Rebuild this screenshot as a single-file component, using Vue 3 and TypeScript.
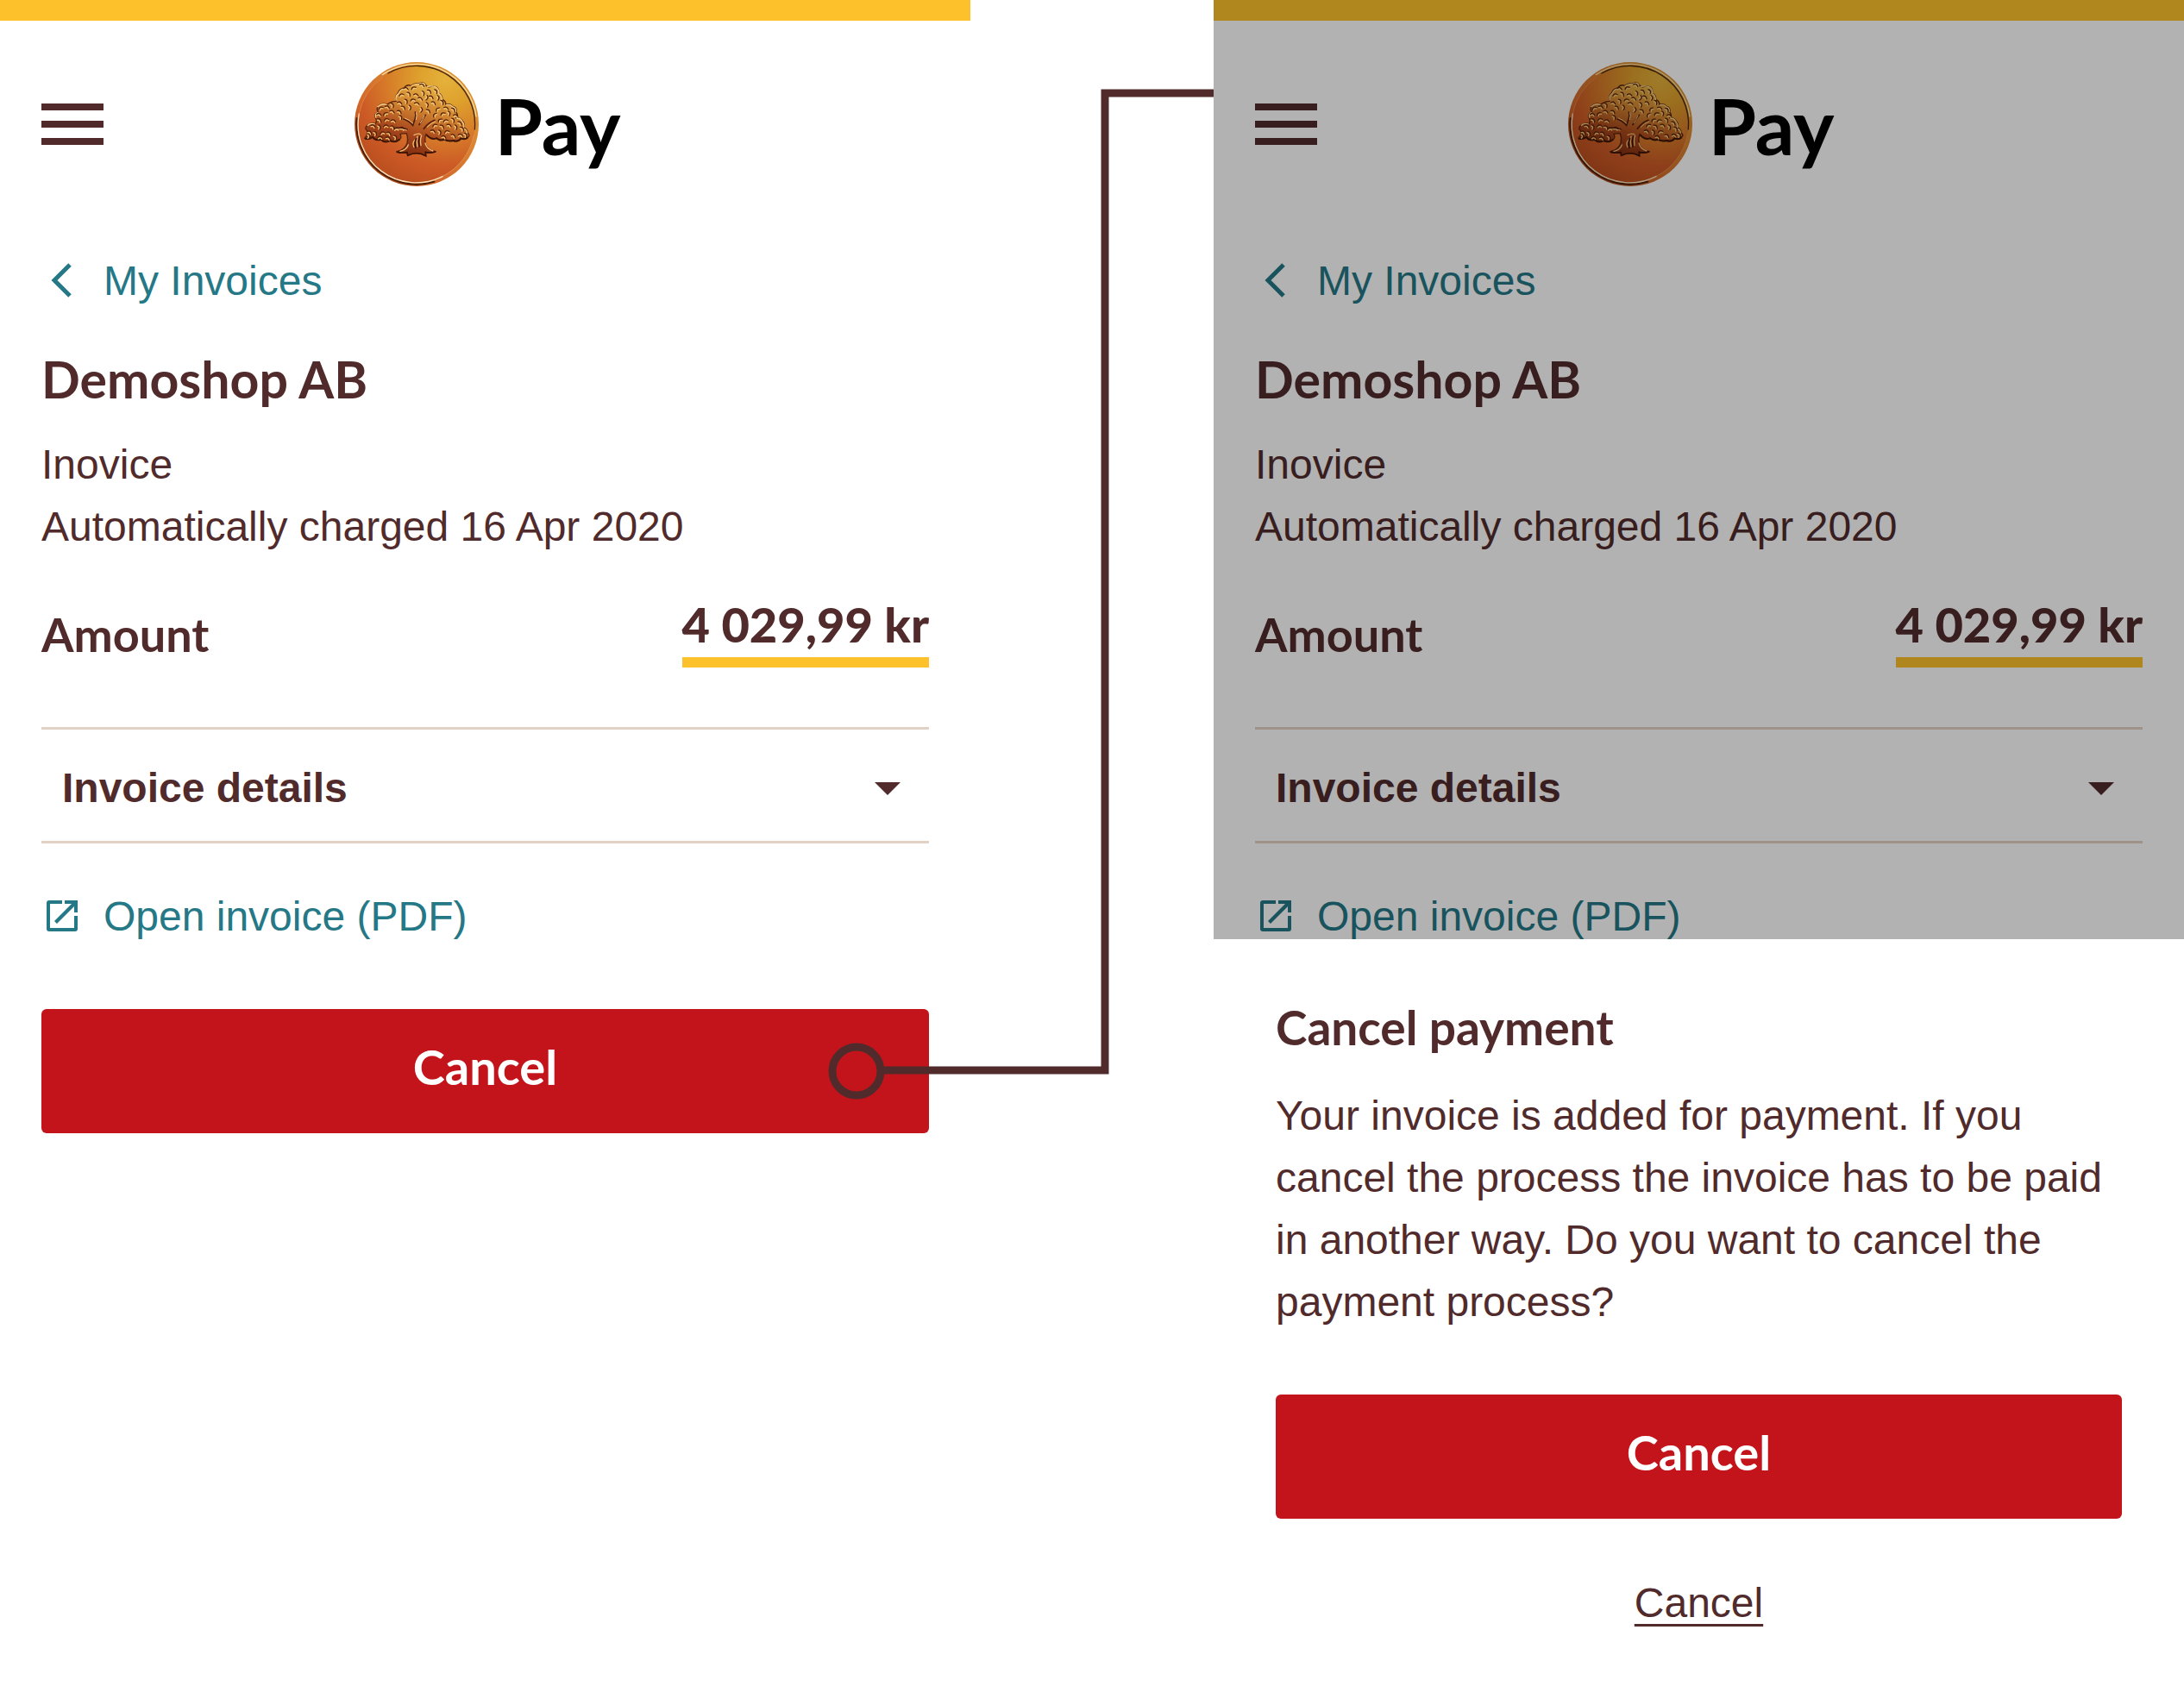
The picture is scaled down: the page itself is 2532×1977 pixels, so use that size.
<script setup lang="ts">
interface Screen {
  id: string
  dialog: boolean
}

const screens: Screen[] = [
  { id: 'invoice', dialog: false },
  { id: 'confirm', dialog: true },
]

// Leaf marks on the coin's oak: x, y and rotation in degrees
const leaves: [number, number, number][] = [
  [212, 128, 10], [238, 126, -30], [268, 116, 20], [293, 138, 40], [316, 138, 60],
  [196, 150, -20], [222, 147, 50], [247, 150, 10], [272, 144, 70], [300, 158, 30],
  [324, 160, 80], [190, 178, 15], [213, 172, 60], [236, 168, -15], [262, 163, 25],
  [285, 160, 100], [308, 178, 30], [338, 176, 60], [124, 196, -30], [147, 192, 20],
  [165, 186, 60], [203, 194, 40], [226, 194, 80], [250, 180, 10], [286, 184, 70],
  [322, 200, -50], [352, 196, 20], [377, 202, 50], [118, 218, 10], [140, 216, -40],
  [164, 208, 20], [189, 209, 30], [266, 202, 90], [290, 206, 40], [312, 220, -60],
  [340, 216, -30], [362, 214, 70], [385, 222, 10], [120, 238, 40], [144, 236, -20],
  [168, 240, 10], [194, 228, 60], [330, 238, -40], [350, 240, -20], [376, 238, 60],
  [400, 248, 40], [98, 258, 20], [120, 262, 70], [142, 258, -10], [165, 262, 30],
  [312, 256, -30], [338, 260, 40], [362, 256, 20], [386, 262, 70], [408, 268, 50],
  [86, 280, 30], [106, 284, 60], [130, 282, -20], [153, 284, 30], [178, 268, -10],
  [200, 266, 20], [306, 276, 20], [330, 280, 70], [354, 278, -20], [377, 292, 30],
  [402, 290, 10], [122, 298, 0], [150, 300, 20], [176, 298, 60], [344, 296, 20],
  [420, 290, 60], [84, 294, 80],
]
</script>

<template>
  <main class="board">
    <section v-for="screen in screens" :key="screen.id" class="screen">
      <header class="top">
        <button class="menu" type="button" aria-label="Menu">
          <span></span><span></span><span></span>
        </button>
        <div class="brand">
          <svg class="coin" viewBox="33 36 432 432" aria-hidden="true">
            <defs>
              <radialGradient :id="screen.id + '-face'" gradientUnits="userSpaceOnUse" cx="350" cy="95" r="380">
                <stop offset="0" stop-color="#e4b23c" />
                <stop offset=".25" stop-color="#dea02c" />
                <stop offset=".55" stop-color="#d67a29" />
                <stop offset=".8" stop-color="#cc5a26" />
                <stop offset="1" stop-color="#bd5020" />
              </radialGradient>
              <linearGradient :id="screen.id + '-rim'" x1="0" y1="1" x2="1" y2="0">
                <stop offset="0" stop-color="#8c3c12" />
                <stop offset=".35" stop-color="#d2672b" />
                <stop offset=".7" stop-color="#dc8a32" />
                <stop offset="1" stop-color="#d9992f" />
              </linearGradient>
              <linearGradient :id="screen.id + '-tree'" gradientUnits="userSpaceOnUse" x1="300" y1="105" x2="225" y2="355">
                <stop offset="0" stop-color="#e5b544" />
                <stop offset=".4" stop-color="#cf8230" />
                <stop offset=".72" stop-color="#a9481d" />
                <stop offset="1" stop-color="#853012" />
              </linearGradient>
            </defs>
            <circle cx="249" cy="252" r="216" :fill="`url(#${screen.id}-rim)`" />
            <circle cx="249" cy="252" r="202" :fill="`url(#${screen.id}-face)`" />
            <g fill="none" stroke-linecap="round">
              <path d="M130 80A209 209 0 0 1 456 225" stroke="#f7dfa0" stroke-width="4" />
              <path d="M150 75A203 203 0 0 1 451 270" stroke="#4a2708" stroke-width="4" />
              <path d="M41 232A209 209 0 0 0 310 452" stroke="#4e1d06" stroke-width="6" />
              <path d="M49 215A202 202 0 0 0 340 433" stroke="#fbe3bd" stroke-width="4" />
              <path d="M340 433A202 202 0 0 0 448 290" stroke="#e59a5c" stroke-width="2" />
              <path d="M49 215A202 202 0 0 1 130 90" stroke="#e88b4c" stroke-width="2" />
            </g>
            <g stroke-linejoin="round">
              <path
                :fill="`url(#${screen.id}-tree)`"
                stroke="#5a240d"
                stroke-width="4"
                d="M68 301Q82 286 76 274Q66 266 78 256Q88 246 106 250Q112 240 106 230Q100 216 114 210Q108 192 118 186Q132 176 146 184Q160 172 178 172Q172 154 184 144Q190 128 206 126Q214 112 230 118Q242 108 254 112Q270 102 280 114Q284 124 296 122Q310 116 320 124Q328 132 326 144Q340 152 338 166Q352 172 350 184Q366 178 376 190Q390 194 386 210Q396 220 386 230Q402 228 408 240Q420 252 412 264Q426 268 426 282Q438 292 426 298Q416 308 404 300Q392 316 376 308Q358 314 346 304Q332 312 318 300Q300 308 282 286Q276 302 280 320Q286 340 315 347Q296 354 280 348L281 362Q250 344 218 361L215 349Q196 355 180 347Q208 342 216 318Q220 300 214 284Q202 284 192 286Q198 302 190 304Q174 318 156 308Q140 320 124 304Q104 310 96 296Q84 306 68 301Z"
              />
              <path
                fill="none"
                stroke="#f5cf86"
                stroke-width="4"
                d="M78 257Q88 247 104 252M108 230Q102 217 115 211M112 192Q132 176 146 186M178 170Q174 154 186 146Q192 130 208 128M230 120Q242 110 254 114Q270 104 280 116M284 122Q310 116 320 126Q328 134 326 146Q338 154 337 168M350 186Q366 180 375 192Q388 196 384 210M388 232Q402 230 407 242Q418 254 411 266M414 268Q424 270 424 284"
              />
              <path
                fill="none"
                stroke="#3f1707"
                stroke-width="6"
                d="M70 302Q84 306 96 297Q104 310 124 305Q140 320 156 309Q174 318 190 305M284 290Q300 308 318 301Q332 312 346 305Q358 314 376 309Q392 316 404 301Q416 308 428 298"
              />
            </g>
            <g fill="none" stroke-linecap="round" stroke-width="4">
              <g v-for="(leaf, i) in leaves" :key="i" :transform="`translate(${leaf[0]} ${leaf[1]}) rotate(${leaf[2]})`">
                <path d="M-8 1Q-1-8 8 2" stroke="#54220b" />
                <path d="M-6 5Q0-2 6 6" stroke="#f3c673" />
              </g>
            </g>
            <g fill="none" stroke-linecap="round">
              <path d="M204 234Q222 240 236 256L242 238Q248 222 244 210M258 254Q266 240 280 220M274 268Q290 246 312 238M172 266Q194 262 216 270" stroke="#4f1d0a" stroke-width="5" />
              <path d="M208 231Q224 236 236 249M247 236Q252 222 248 212M262 248Q270 236 276 222M286 262Q298 248 314 243M176 270Q194 267 214 273" stroke="#f4c67e" stroke-width="3" />
              <path d="M240 290Q254 282 264 288M240 332Q232 318 244 306M252 330Q248 310 252 294M264 326Q260 306 266 292M279 318Q284 338 306 345M192 346Q214 342 220 324" stroke="#f3bd72" stroke-width="4" />
              <path d="M246 334Q240 318 248 302M258 330Q254 312 259 296M181 349Q200 354 216 350L218 361Q250 345 281 362L280 350Q298 354 314 348" stroke="#3d1506" stroke-width="5" />
            </g>
          </svg>
          <span class="wordmark">Pay</span>
        </div>
      </header>

      <div class="content">
        <a class="link" href="#invoices">
          <svg viewBox="0 0 48 48" aria-hidden="true">
            <path d="M33 5L15 23L33 41" fill="none" stroke="currentColor" stroke-width="5" />
          </svg>
          My Invoices
        </a>
        <h1>Demoshop AB</h1>
        <p class="summary">Inovice<br />Automatically charged 16 Apr 2020</p>
        <div class="amount">
          <span class="label">Amount</span>
          <strong class="value">4 029,99 kr</strong>
        </div>
        <button class="details" type="button" aria-expanded="false">
          Invoice details
          <svg viewBox="0 0 30 15" aria-hidden="true">
            <path d="M0 0H30L15 15Z" fill="currentColor" />
          </svg>
        </button>
        <a class="link pdf" href="#pdf">
          <svg viewBox="0 0 48 48" aria-hidden="true">
            <path
              fill="currentColor"
              d="M24 5V9H10V37H38V23H42V38Q42 41 39 41H9Q6 41 6 38V8Q6 5 9 5ZM27 5H42V19H38V12L18 32L15 29L35 9H27Z"
            />
          </svg>
          Open invoice (PDF)
        </a>
        <button v-if="!screen.dialog" class="primary" type="button">Cancel</button>
      </div>

      <template v-if="screen.dialog">
        <div class="scrim"></div>
        <div class="sheet" role="dialog" aria-labelledby="sheet-title">
          <h2 id="sheet-title">Cancel payment</h2>
          <p>
            Your invoice is added for payment. If you cancel the process the invoice has to be paid
            in another way. Do you want to cancel the payment process?
          </p>
          <button class="primary" type="button">Cancel</button>
          <button class="dismiss" type="button">Cancel</button>
        </div>
      </template>
    </section>

    <!-- Flow arrow from the cancel button to the confirmation screen -->
    <svg class="connector" viewBox="0 0 447 1176" aria-hidden="true">
      <g fill="none" stroke="#512b2b" stroke-width="9">
        <circle cx="33" cy="1139" r="28" />
        <path d="M62 1138H321V5H447" />
      </g>
    </svg>
  </main>
</template>

<style>
body {
  margin: 0;
  background: #fff;
}
</style>

<style scoped>
.board {
  position: relative;
  display: grid;
  grid-template-columns: 1fr 1fr;
  column-gap: 282px;
  min-height: 100vh;
  color: #512b2b;
  font-family: "Liberation Sans", Arial, sans-serif;
  font-size: 48px;
  line-height: 72px;
}

.board * {
  box-sizing: border-box;
}

.screen {
  position: relative;
  overflow: hidden;
  background: #fff;
}

button {
  margin: 0;
  padding: 0;
  border: 0;
  background: none;
  color: inherit;
  font: inherit;
  cursor: pointer;
}

.top {
  display: grid;
  grid-template-columns: 1fr auto 1fr;
  align-items: center;
  padding: 48px 48px 0;
  border-top: 24px solid #fdc12b;
}

.menu {
  display: flex;
  flex-direction: column;
  gap: 12px;
  width: 72px;
}

.menu span {
  height: 8px;
  background: #512b2b;
}

.brand {
  display: flex;
  align-items: center;
  gap: 18px;
  margin-left: 6px;
}

.coin {
  width: 144px;
  height: 144px;
}

.wordmark {
  padding-top: 2px;
  color: #000;
  font-family: Lato, sans-serif;
  font-size: 90px;
  font-weight: 700;
}

.content {
  display: flex;
  flex-direction: column;
  padding: 74px 48px 0;
}

.link {
  display: flex;
  align-items: center;
  gap: 24px;
  color: #257886;
  text-decoration: none;
}

.link svg {
  width: 48px;
  height: 48px;
}

h1,
h2,
p {
  margin: 0;
}

h1,
h2,
.amount,
.primary {
  font-family: Lato, sans-serif;
  font-weight: 700;
  line-height: 72px;
}

h1 {
  margin-top: 42px;
  font-size: 59px;
}

h2 {
  font-size: 55px;
}

.summary {
  margin-top: 27px;
}

.amount {
  display: flex;
  justify-content: space-between;
  align-items: flex-start;
  margin-top: 41px;
}

.label {
  padding-top: 12px;
  font-size: 54px;
}

.value {
  padding-bottom: 2px;
  border-bottom: 12px solid #fdc12b;
  font-size: 56px;
}

.details {
  display: flex;
  justify-content: space-between;
  align-items: center;
  margin-top: 69px;
  padding: 32px 33px 25px 24px;
  border-top: 3px solid #e2d2c5;
  border-bottom: 3px solid #e2d2c5;
  font-weight: 700;
}

.details svg {
  width: 30px;
  height: 15px;
}

.pdf {
  margin-top: 49px;
}

.primary {
  margin-top: 71px;
  padding: 31px 24px 41px;
  border-radius: 6px;
  background: #c4141b;
  color: #fff;
  font-size: 56px;
}

.scrim {
  position: absolute;
  inset: 0;
  background: rgba(0, 0, 0, 0.3);
}

.sheet {
  position: absolute;
  right: 0;
  bottom: 0;
  left: 0;
  display: flex;
  flex-direction: column;
  padding: 66px 72px 82px;
  background: #fff;
}

.sheet p {
  margin-top: 31px;
}

.dismiss {
  align-self: center;
  margin-top: 62px;
  text-decoration: underline;
  text-decoration-thickness: 3px;
  text-underline-offset: 8px;
}

.connector {
  position: absolute;
  top: 103px;
  right: calc(50% - 141px);
  width: 447px;
  height: 1176px;
  pointer-events: none;
}
</style>
